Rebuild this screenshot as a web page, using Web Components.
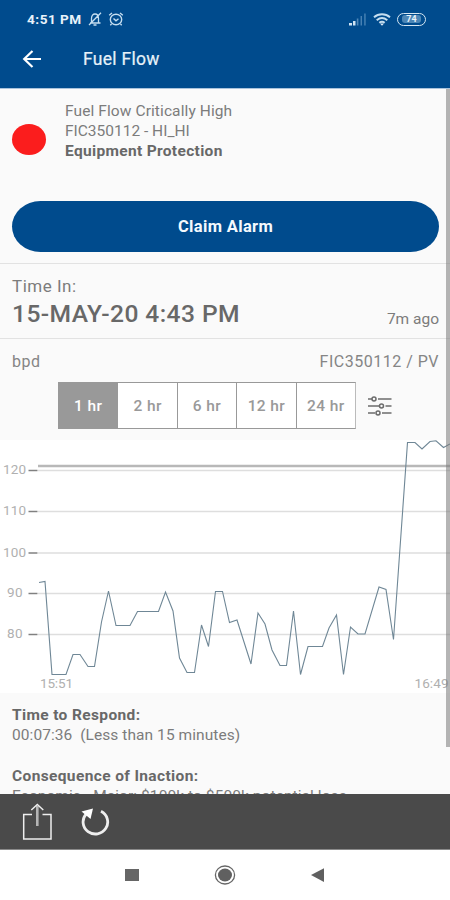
<!DOCTYPE html>
<html lang="en">
<head>
<meta charset="utf-8">
<title>Fuel Flow</title>
<style>
  :root {
    --blue: #004b8d;
    --bg: #fafafa;
    --text: #7c7c7c;
    --strong: #686868;
    --line: #e2e2e2;
  }

  body {
    margin: 0;
    width: 450px;
    height: 900px;
    overflow: hidden;
    font-family: Roboto, "Liberation Sans", sans-serif;
    background: #fff;
  }
</style>
</head>
<body>
<alarm-app></alarm-app>

<script>
(function () {
  'use strict';

  class StatusBar extends HTMLElement {
    constructor() {
      super();
      this.attachShadow({ mode: 'open' });
    }

    connectedCallback() {
      this.shadowRoot.innerHTML = `
        <style>
          :host {
            display: flex;
            align-items: center;
            height: 38px;
            box-sizing: border-box;
            padding: 0 24px 0 27px;
            background: var(--blue);
            color: #e8f2fa;
          }
          .time {
            font-size: 13.6px;
            font-weight: 700;
            letter-spacing: .5px;
            margin-right: 6px;
          }
          svg { display: block; fill: none; stroke: #c5def0; }
          .bell { margin-right: 6px; }
          .signal { margin-left: auto; margin-right: 7px; }
          .wifi { margin-right: 6px; }
          .battery {
            display: flex;
            align-items: center;
            justify-content: center;
            width: 29px;
            height: 13px;
            box-sizing: border-box;
            border: 1.5px solid #d5e6f2;
            border-radius: 7px;
            font-size: 9px;
            font-weight: 700;
          }
          .level {
            line-height: 8px;
            padding: 0 4px;
            background: #4c86b6;
            border-radius: 3px;
          }
        </style>
        <span class="time">4:51 PM</span>
        <svg class="bell" width="14" height="14" viewBox="0 0 14 14" stroke-width="1.3">
          <path d="M2 11h10.5M3.5 10.5V6.5C3.5 3.5 5 2 7 2s3.5 1.5 3.5 4.5v4M5.5 13h3M13 .8L1 13"/>
        </svg>
        <svg width="16" height="14" viewBox="0 0 16 14" stroke-width="1.4">
          <ellipse cx="8" cy="7.5" rx="5.7" ry="5.2"/>
          <path d="M1.2 3.2L4 1M14.8 3.2L12 1M5.5 6.5L8 8.8l2.500-2M3.5 12l-1.2 1.3M12.5 12l1.2 1.3"/>
        </svg>
        <svg class="signal" width="17" height="13" viewBox="0 0 17 13">
          <g stroke="none">
            <path d="M0 10h3v2.5H0zM4 8h2.5v4.5H4z" fill="#cfe4f3"/>
            <path d="M7.8 5.5h1.6v7H7.800zM11.600 3h1.3v9.5h-1.3zM15.3.5h1.3v12h-1.3z" fill="#4f88b8"/>
          </g>
        </svg>
        <svg class="wifi" width="18" height="13" viewBox="0 0 18 13" stroke-width="1.9">
          <path d="M1 4.3C5.5.3 12.5.3 17 4.3M3.7 7.2c3.2-2.7 7.4-2.7 10.6 0M6.3 9.8c1.8-1.3 3.6-1.3 5.4 0"/>
          <path d="M7 10.5h4l-2 2.3z" style="fill:#e0eef8;stroke:none"/>
        </svg>
        <div class="battery"><span class="level">74</span></div>
      `;
    }
  }

  class AppHeader extends HTMLElement {
    constructor() {
      super();
      this.attachShadow({ mode: 'open' });
    }

    connectedCallback() {
      this.shadowRoot.innerHTML = `
        <style>
          :host {
            display: flex;
            align-items: center;
            height: 51px;
            box-sizing: border-box;
            padding: 0 22px 8px;
            background: var(--blue);
            border-bottom: 1px solid #a9c3dc;
            color: #e6f1f9;
          }
          svg { display: block; margin-right: 41px; }
          .title {
            font-size: 17.5px;
            letter-spacing: .3px;
            -webkit-text-stroke: .2px currentColor;
          }
        </style>
        <svg width="20" height="18" viewBox="0 0 20 18" fill="none" stroke="#fff" stroke-width="2.2">
          <path d="M19 9H2.5M10.5 1L2.2 9l8.3 8"/>
        </svg>
        <span class="title"><slot></slot></span>
      `;
    }
  }

  class AlarmSummary extends HTMLElement {
    constructor() {
      super();
      this.attachShadow({ mode: 'open' });
    }

    connectedCallback() {
      this.shadowRoot.innerHTML = `
        <style>
          :host {
            display: flex;
            height: 112px;
            box-sizing: border-box;
            padding: 12px 12px 0;
            font-size: 15.5px;
            line-height: 20px;
            color: var(--text);
          }
          .dot {
            width: 34px;
            height: 31px;
            margin: 23px 19px 0 0;
            border-radius: 50%;
            background: #fb1d1d;
          }
          .title { letter-spacing: .1px; }
          .kind { font-weight: 700; letter-spacing: .33px; color: var(--strong); }
        </style>
        <div class="dot"></div>
        <div>
          <div class="title"><slot name="title"></slot></div>
          <div class="tag"><slot name="tag"></slot></div>
          <div class="kind"><slot name="kind"></slot></div>
        </div>
      `;
    }
  }

  class ClaimButton extends HTMLElement {
    constructor() {
      super();
      this.attachShadow({ mode: 'open' });
    }

    connectedCallback() {
      this.shadowRoot.innerHTML = `
        <style>
          :host { display: block; padding: 0 11px 11px 12px; border-bottom: 1px solid var(--line); }
          button {
            display: block;
            width: 100%;
            height: 51px;
            padding: 0;
            border: none;
            border-radius: 29px / 26px;
            background: var(--blue);
            color: #f4f9fd;
            font: 700 16.5px Roboto, "Liberation Sans", sans-serif;
            letter-spacing: .35px;
          }
        </style>
        <button type="button"><slot></slot></button>
      `;
    }
  }

  class TimeIn extends HTMLElement {
    constructor() {
      super();
      this.attachShadow({ mode: 'open' });
    }

    connectedCallback() {
      this.shadowRoot.innerHTML = `
        <style>
          :host {
            display: block;
            height: 75px;
            box-sizing: border-box;
            padding: 11px 11px 0 12px;
            border-bottom: 1px solid var(--line);
            color: var(--text);
          }
          .label { font-size: 17px; line-height: 22px; letter-spacing: .5px; }
          .row { display: flex; justify-content: space-between; align-items: baseline; }
          .date {
            font-size: 24.6px;
            line-height: 33px;
            font-weight: 500;
            letter-spacing: .4px;
            color: var(--strong);
          }
          .ago { font-size: 15.5px; position: relative; top: 2px; }
        </style>
        <div class="label">Time In:</div>
        <div class="row">
          <span class="date"><slot></slot></span>
          <span class="ago">${this.getAttribute('ago')}</span>
        </div>
      `;
    }
  }

  class RangePicker extends HTMLElement {
    constructor() {
      super();
      this.attachShadow({ mode: 'open' });
    }

    connectedCallback() {
      const ranges = this.getAttribute('ranges').split(',');
      const active = this.getAttribute('active');

      this.shadowRoot.innerHTML = `
        <style>
          :host { display: flex; align-items: center; padding-left: 58px; height: 47px; }
          .group {
            display: flex;
            width: 298px;
            height: 47px;
            box-sizing: border-box;
            border: 1px solid #999;
            border-right-color: #bbb;
            background: #fff;
          }
          .item {
            flex: 1;
            display: flex;
            align-items: center;
            justify-content: center;
            font-size: 15.5px;
            font-weight: 500;
            letter-spacing: .4px;
            color: #999;
          }
          .item + .item { border-left: 1px solid #999; }
          .item.active { background: #999; color: #fff; }
          svg { display: block; margin-left: 12px; }
        </style>
        <div class="group">
          ${ranges.map((r) => `<div class="item${r === active ? ' active' : ''}">${r}</div>`).join('')}
        </div>
        <svg width="24" height="20" viewBox="0 0 24 20" fill="none" stroke="#6c6c6c" stroke-width="1.5">
          <path d="M0 3h4M10 3h13.5M0 10h11M17.5 10h6M0 17h7M14 17h9.5"/>
          <ellipse cx="6" cy="3" rx="2" ry="1.9"/>
          <ellipse cx="13.5" cy="10" rx="2" ry="1.9"/>
          <ellipse cx="10" cy="17" rx="2" ry="1.9"/>
        </svg>
      `;
    }
  }

  class TrendChart extends HTMLElement {
    constructor() {
      super();
      this.attachShadow({ mode: 'open' });
    }

    connectedCallback() {
      const ticks = [[120, 30.5], [110, 71.5], [100, 113], [90, 153.5], [80, 194.5]];
      const points = [
        [39, 142.5], [45, 141.5], [52, 234.5], [66, 234.5], [73, 214.5], [80, 214.5],
        [88, 226.5], [94.5, 226.5], [101.5, 182], [108.5, 151], [116, 185.5], [130, 185.5],
        [137.5, 171.5], [158.5, 171.5], [165.5, 152], [173, 171], [179.5, 218], [187, 232.5],
        [194.5, 232.5], [201.5, 185], [208.5, 206.5], [215.5, 151.5], [222.5, 151.5],
        [229.5, 182.5], [237, 180], [251, 224], [258, 173], [265, 184], [272, 210],
        [280, 225.5], [286.5, 225.5], [293.5, 171], [300.5, 234.5], [308, 206.5],
        [322.5, 206.5], [329, 188], [336.5, 175], [343.5, 234.5], [350.5, 187], [358, 194],
        [365, 194], [379, 147], [386, 149.5], [393.5, 199.5], [407.5, 2.5], [415, 2.5],
        [422, 9], [430, 1.5], [436, .8], [443.5, 7.5], [450, 4]
      ];

      this.shadowRoot.innerHTML = `
        <style>
          :host { display: block; height: 253px; background: #fff; }
          svg { display: block; }
          text { font-size: 13.5px; fill: #b0b0b0; }
        </style>
        <svg width="450" height="253" viewBox="0 0 450 253">
          ${ticks.map(([v, y]) => `
            <path d="M38 ${y}H450" stroke="#dedede" stroke-width="1.5"/>
            <path d="M28.5 ${y}H37.5" stroke="#808080" stroke-width="1.5"/>
            <text x="${v < 100 ? 7 : 3}" y="${y + 3.5}" textLength="${v < 100 ? 15.5 : 23}">${v}</text>
          `).join('')}
          <path d="M38 26H450" stroke="#b8b8b8" stroke-width="2.5"/>
          <polyline points="${points.join(' ')}" fill="none" stroke="#6f8796" stroke-width="1.1"/>
          <text x="40" y="248" textLength="33">15:51</text>
          <text x="414.5" y="248" textLength="34">16:49</text>
        </svg>
      `;
    }
  }

  class DetailBlock extends HTMLElement {
    constructor() {
      super();
      this.attachShadow({ mode: 'open' });
    }

    connectedCallback() {
      this.shadowRoot.innerHTML = `
        <style>
          :host {
            display: block;
            padding: 12px 12px 9px;
            font-size: 15.5px;
            line-height: 20px;
            color: var(--text);
          }
          .head { font-weight: 700; letter-spacing: .37px; color: var(--strong); }
          .text { white-space: pre; letter-spacing: .07px; }
        </style>
        <div class="head">${this.getAttribute('heading')}</div>
        <div class="text"><slot></slot></div>
      `;
    }
  }

  class ActionBar extends HTMLElement {
    constructor() {
      super();
      this.attachShadow({ mode: 'open' });
    }

    connectedCallback() {
      this.shadowRoot.innerHTML = `
        <style>
          :host {
            display: flex;
            gap: 28px;
            height: 56px;
            box-sizing: border-box;
            padding: 9px 22px 0;
            background: #4a4a4a;
            border-bottom: 1px solid #8a8a8a;
          }
          svg { display: block; fill: none; stroke: #eee; }
        </style>
        <svg width="31" height="38" viewBox="0 0 31 38" stroke-width="1.5">
          <path d="M10 11.5H1.7V36H29V11.5H20.5"/>
          <path d="M15.3 3V23" stroke="#b5b5b5" stroke-width="2.6"/>
          <path d="M9.3 7L15.3 1.5L21.3 7"/>
        </svg>
        <svg width="29" height="38" viewBox="0 0 29 38" stroke-width="2.8">
          <path d="M20 8.300A12.3 12 0 1 1 5.2 11"/>
          <path d="M.5 8.5L12 5.500L9.5 16z" style="fill:#fff;stroke:none"/>
        </svg>
      `;
    }
  }

  class NavBar extends HTMLElement {
    constructor() {
      super();
      this.attachShadow({ mode: 'open' });
    }

    connectedCallback() {
      this.shadowRoot.innerHTML = `
        <style>
          :host {
            display: flex;
            align-items: center;
            justify-content: center;
            gap: 75px;
            height: 50px;
            background: #fff;
          }
          svg { display: block; }
        </style>
        <svg width="14" height="20"><path d="M0 4h14v12H0z" fill="#666"/></svg>
        <svg width="22" height="20">
          <ellipse cx="11" cy="10" rx="9.6" ry="9" fill="none" stroke="#666" stroke-width="1.3"/>
          <ellipse cx="11" cy="10" rx="7" ry="6.5" fill="#606060"/>
        </svg>
        <svg width="14" height="20"><path d="M0 10L13 3.3V17z" fill="#606060"/></svg>
      `;
    }
  }

  class AlarmApp extends HTMLElement {
    constructor() {
      super();
      this.attachShadow({ mode: 'open' });
    }

    connectedCallback() {
      this.shadowRoot.innerHTML = `
        <style>
          :host { display: flex; flex-direction: column; height: 900px; }
          .content {
            position: relative;
            flex: 1;
            min-height: 0;
            overflow: hidden;
            background: var(--bg);
          }
          .scrollbar {
            position: absolute;
            top: 0;
            right: 0;
            width: 4px;
            height: 658px;
            background: rgba(120, 120, 120, .55);
          }
          .series {
            display: flex;
            justify-content: space-between;
            height: 43px;
            box-sizing: border-box;
            padding: 12px 11px 0 12px;
            font-size: 16px;
            line-height: 21px;
            letter-spacing: .5px;
            color: #858585;
          }
          trend-chart { margin-top: 11px; }
        </style>
        <status-bar></status-bar>
        <app-header>Fuel Flow</app-header>
        <div class="content">
          <alarm-summary>
            <span slot="title">Fuel Flow Critically High</span>
            <span slot="tag">FIC350112 - HI_HI</span>
            <span slot="kind">Equipment Protection</span>
          </alarm-summary>
          <claim-button>Claim Alarm</claim-button>
          <time-in ago="7m ago">15-MAY-20 4:43 PM</time-in>
          <div class="series"><span>bpd</span><span>FIC350112 / PV</span></div>
          <range-picker ranges="1 hr,2 hr,6 hr,12 hr,24 hr" active="1 hr"></range-picker>
          <trend-chart></trend-chart>
          <detail-block heading="Time to Respond:">00:07:36  (Less than 15 minutes)</detail-block>
          <detail-block heading="Consequence of Inaction:">Economic - Major: $100k to $500k potential loss</detail-block>
          <div class="scrollbar"></div>
        </div>
        <action-bar></action-bar>
        <nav-bar></nav-bar>
      `;
    }
  }

  customElements.define('status-bar', StatusBar);
  customElements.define('app-header', AppHeader);
  customElements.define('alarm-summary', AlarmSummary);
  customElements.define('claim-button', ClaimButton);
  customElements.define('time-in', TimeIn);
  customElements.define('range-picker', RangePicker);
  customElements.define('trend-chart', TrendChart);
  customElements.define('detail-block', DetailBlock);
  customElements.define('action-bar', ActionBar);
  customElements.define('nav-bar', NavBar);
  customElements.define('alarm-app', AlarmApp);
})();
</script>
</body>
</html>
